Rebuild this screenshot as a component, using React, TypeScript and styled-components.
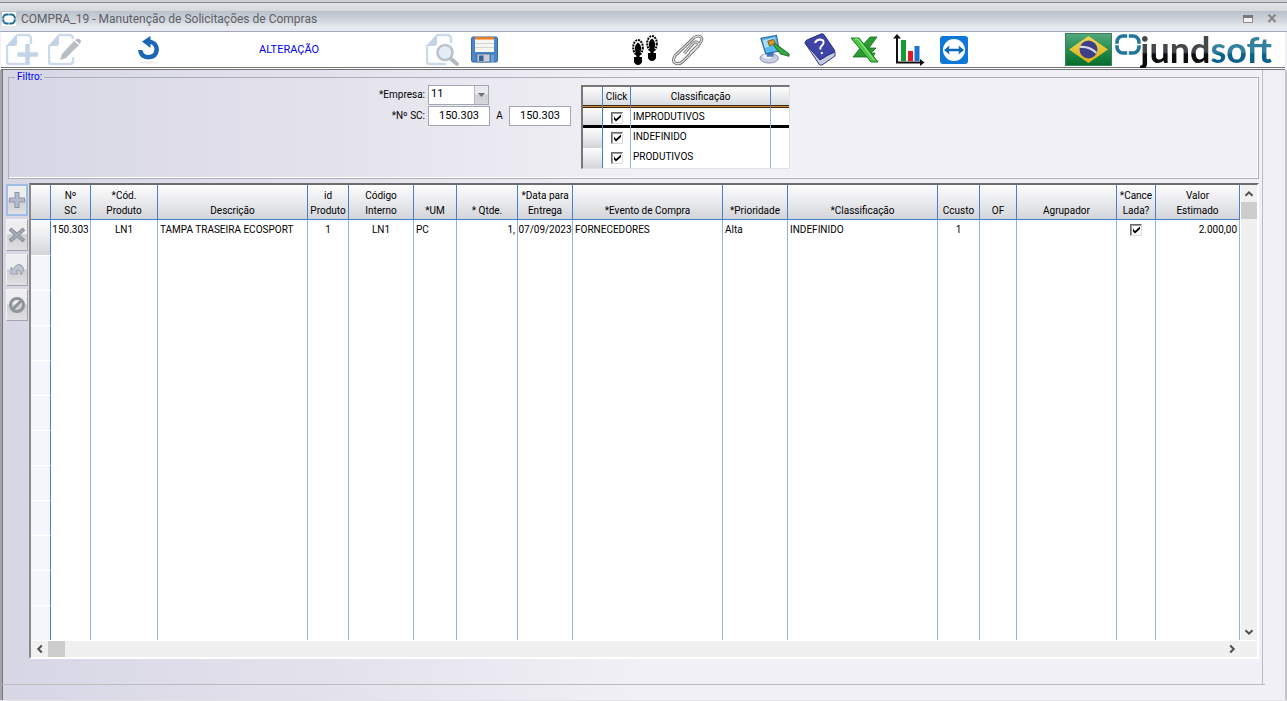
import React from "react";
import styled, { createGlobalStyle, css } from "styled-components";

const sans = `Roboto, "Liberation Sans", sans-serif`;

const GlobalStyle = createGlobalStyle`
  *, *::before, *::after { box-sizing: border-box; }
  body { margin: 0; background: #f1f0f6; font: 10px/14px ${sans}; color: #000; }
  button, input, select { font: inherit; color: inherit; margin: 0; }
`;

const Window = styled.div`
  display: flex;
  flex-direction: column;
  min-height: 100vh;
  border-bottom: 1px solid #e2e2e4;
`;

const TitleBar = styled.header`
  display: flex;
  align-items: center;
  height: 32px;
  padding: 6px 9px 0 2px;
  border-bottom: 1px solid #a3a9bb;
  background: linear-gradient(
    #cfd1d6 0 2px,
    #85878b 2px 3px,
    #e4e5e8 3px,
    #d5d7db 11px,
    #b9c1cb 11px,
    #d0d4da 20px,
    #e6e8ef 27px,
    #e6e8f3 31px
  );
`;

const Title = styled.h1`
  flex: 1;
  margin: 0 0 0 5px;
  font: 400 12px/16px ${sans};
  color: #5c5f66;
`;

const PlainButton = styled.button`
  display: flex;
  align-items: center;
  justify-content: center;
  padding: 0;
  border: 0;
  background: none;
`;

const CaptionButton = styled(PlainButton)`
  width: 12px;
  height: 12px;
  margin-left: 12px;
`;

const Toolbar = styled.div`
  display: flex;
  align-items: center;
  height: 38px;
  margin: 0 2px 0 1px;
  padding: 0 13px 0 5px;
  border-bottom: 3px double #747474;
  background: #fff;
`;

const ToolGroup = styled.div<{ $gap: number; $before?: number }>`
  display: flex;
  align-items: center;
  gap: ${(p) => p.$gap}px;
  margin-left: ${(p) => p.$before ?? 0}px;
`;

const Mode = styled.span`
  width: 64px;
  font-size: 11px;
  line-height: 16px;
  color: #0000f0;
  white-space: nowrap;
`;

const Brand = styled.div`
  display: flex;
  align-items: center;
  margin-left: auto;
`;

const Wordmark = styled.span`
  display: flex;
  margin: -2px 0 0 -2px;
  font: 700 36px/38px Lato, sans-serif;
`;

const WordPart = styled.span<{ $from: string; $to: string }>`
  background: linear-gradient(${(p) => p.$from} 58%, ${(p) => p.$to} 64%);
  background-clip: text;
  color: transparent;
`;

const Body = styled.main`
  flex: 1;
  display: flex;
  flex-direction: column;
  border-left: 2px solid #a5a5a9;
  border-right: 2px solid #c6c6ca;
  background: linear-gradient(90deg, #d7d6e5, #e3e2ec 25%, #f1f0f6 50%);
  box-shadow: inset 1px 0 #76767a;
`;

const Work = styled.div`
  flex: 1;
  margin-right: 22px;
  padding: 0 3px 25px 4px;
  border-right: 1px solid #bcbcc0;
`;

const StatusStrip = styled.footer`
  height: 16px;
  margin-right: 20px;
  border-top: 1px solid #bcbcbc;
`;

const Filter = styled.fieldset`
  display: flex;
  align-items: flex-start;
  margin: 0 0 4px 2px;
  padding: 1px 0 9px 366px;
  border: 1px solid #a9b0b8;
  box-shadow: inset -1px -1px #fff;
`;

const Legend = styled.legend`
  margin-left: -360px;
  padding: 0 2px;
  height: 14px;
  color: #0000f0;
`;

const Fields = styled.div`
  display: grid;
  grid-template-columns: 50px auto;
  gap: 1px 3px;
`;

const FieldLabel = styled.label`
  line-height: 20px;
  text-align: right;
  white-space: nowrap;
`;

const RangeRow = styled.div`
  display: flex;
  align-items: center;
`;

const RangeTo = styled.label`
  width: 19px;
  text-align: center;
`;

const boxed = css`
  height: 20px;
  border: 1px solid #a2a9b3;
  border-radius: 0;
  background: #fff;
  font-size: 11px;
  line-height: 16px;
`;

const NumberBox = styled.input`
  ${boxed}
  width: 62px;
  padding: 0 0 2px;
  text-align: center;
`;

const SelectWrap = styled.div`
  position: relative;
  width: 61px;
  height: 20px;
`;

const Select = styled.select`
  ${boxed}
  width: 100%;
  padding: 0 16px 2px 2px;
  appearance: none;
`;

const SelectArrow = styled.span`
  position: absolute;
  top: 1px;
  right: 1px;
  display: flex;
  align-items: center;
  justify-content: center;
  width: 14px;
  height: 18px;
  border-left: 1px solid #b6bac2;
  background: linear-gradient(#e9eaed 45%, #cdd0d6 50%, #d5d7dc);
  pointer-events: none;
`;

const sunken = css`
  border: 2px solid;
  border-color: #6d6d6d #fff #fff #8a8a8a;
`;

const ClassFrame = styled.div`
  width: 209px;
  margin-left: 10px;
  border: solid;
  border-width: 2px 1px 1px 2px;
  border-color: #777 #e2e2e6 #e2e2e6 #777;
  background: #fff;
`;

const TableBase = styled.table`
  width: 100%;
  table-layout: fixed;
  border-collapse: separate;
  border-spacing: 0;
  th, td { padding: 0; font-weight: 400; overflow: hidden; white-space: nowrap; }
`;

const raised = "linear-gradient(#fdfdfd, #e9eaed 50%, #d3d5da)";

const ClassHead = styled.th`
  height: 21px;
  border-right: 1px solid #4a7fc8;
  background: ${raised};
  box-shadow: inset 0 -1px #3a2a18, inset 0 -2px #d08a3c, inset 0 -3px #3a2a18;
  line-height: 20px;
  vertical-align: top;
  &:last-child { border-right: 0; }
`;

const ClassRow = styled.tr<{ $current?: boolean }>`
  td {
    height: 20px;
    border-right: 1px solid #94b2da;
    line-height: 18px;
    vertical-align: top;
    box-shadow: ${(p) => (p.$current ? "inset 0 -3px #000" : "none")};
  }
  td:first-child {
    background: ${raised};
    border-right-color: #4a7fc8;
  }
  td:nth-child(3) { padding-left: 2px; }
  td:last-child { border-right: 0; }
`;

const CheckWrap = styled.span`
  display: inline-grid;
  width: 12px;
  height: 12px;
  margin: 4px 0 0;
  vertical-align: top;
  > * { grid-area: 1 / 1; }
  svg { display: block; pointer-events: none; }
`;

const CheckInput = styled.input`
  appearance: none;
  width: 12px;
  height: 12px;
  border: 1px solid;
  border-color: #6a6a6a #dcdcdc #dcdcdc #6a6a6a;
  background: #fff;
  box-shadow: inset 1px 1px #9a9a9a;
`;

const Centered = styled.td`
  text-align: center;
`;

const GridArea = styled.section`
  display: flex;
  align-items: flex-start;
`;

const SideButtons = styled.div`
  display: flex;
  flex-direction: column;
  gap: 3px;
  width: 23px;
  padding: 1px 1px 0 0;
`;

const SideButton = styled(PlainButton)<{ $focus?: boolean }>`
  width: 22px;
  height: 32px;
  border: ${(p) => (p.$focus ? "2px solid #9dbce6" : "1px solid #a4a4a8")};
  border-top-color: ${(p) => (p.$focus ? "#9dbce6" : "#f4f4f6")};
  border-left-color: ${(p) => (p.$focus ? "#9dbce6" : "#f4f4f6")};
  background: linear-gradient(#eeeef0 45%, #cfcfd1 50%, #e0e0e2);
`;

const Frame = styled.div`
  ${sunken}
  flex: 1;
  display: grid;
  grid-template-columns: 1fr 16px;
  grid-template-rows: auto 16px;
  gap: 1px;
  min-width: 0;
  background: #fff;
`;

const HeadCell = styled.th`
  height: 35px;
  border-right: 1px solid #4a7fc8;
  border-bottom: 1px solid #4a7fc8;
  background: ${raised};
  line-height: 15px;
  vertical-align: bottom;
  && { padding-bottom: 1px; }
`;

const DataCell = styled.td<{ $align?: string }>`
  height: 35px;
  border-right: 1px solid #94b2da;
  text-align: ${(p) => p.$align ?? "left"};
  line-height: 20px;
  vertical-align: top;
  && { padding: 0 ${(p) => (p.$align === "center" ? 0 : 2)}px; }
`;

const Selector = styled.td<{ $active?: boolean }>`
  height: 35px;
  border-right: 1px solid #4a7fc8;
  border-top: 1px solid #fff;
  background: ${(p) => (p.$active ? raised : "#f3f7fc")};
`;

const ScrollBar = styled.div<{ $vertical?: boolean }>`
  display: flex;
  flex-direction: ${(p) => (p.$vertical ? "column" : "row")};
  grid-column: ${(p) => (p.$vertical ? "auto" : "1 / 3")};
  padding-right: ${(p) => (p.$vertical ? 0 : 17)}px;
  background: #f0f0f0;
`;

const ScrollButton = styled(PlainButton)`
  flex: none;
  width: 17px;
  height: 16px;
`;

const VScrollButton = styled(ScrollButton)`
  width: 16px;
  height: 17px;
`;

const Thumb = styled.div`
  flex: none;
  width: 17px;
  height: 17px;
  max-width: 100%;
  max-height: 100%;
  background: #cdcdcd;
`;

const Spacer = styled.div`
  flex: 1;
`;

function Check({ label }: { label: string }) {
  return (
    <CheckWrap>
      <CheckInput type="checkbox" defaultChecked aria-label={label} />
      <svg width="12" height="12" viewBox="0 0 12 12" aria-hidden="true">
        <path d="M3 4.500v3L5 9.500 10 5V2.500L5 7z" fill="#000" />
      </svg>
    </CheckWrap>
  );
}

function Chevron({ turn }: { turn: number }) {
  return (
    <svg width="10" height="10" viewBox="0 0 10 10" aria-hidden="true">
      <path d="M1.500 6.800 5 3.300 8.500 6.800" fill="none" stroke="#505050" strokeWidth="2" transform={`rotate(${turn} 5 5)`} />
    </svg>
  );
}

function NewIcon() {
  return (
    <svg width="34" height="34" viewBox="0 0 34 34">
      <path d="M11 2H21q4 0 4 4v5M19 31H4q-3 0-3-3V12" fill="none" stroke="#cddaea" strokeWidth="2.400" />
      <path d="M0 13 11 1v9q0 3-3 3z" fill="#c3d2e6" />
      <path d="M21.500 11v21M11.500 21.500H32" stroke="#c3d3e8" strokeWidth="4.500" />
    </svg>
  );
}

function EditIcon() {
  return (
    <svg width="34" height="34" viewBox="0 0 34 34">
      <path d="M10.500 2H21q4 0 4 4M25 24v4q0 3-3 3H4q-3 0-3-3V12" fill="none" stroke="#cddaea" strokeWidth="2.400" />
      <path d="M0 13 11 1v9q0 3-3 3z" fill="#c3d2e6" />
      <path d="M12 27l2-6L26 8l5 4-13 13z" fill="#b9bdc4" />
      <path d="M27 7q3-2 5-.5t-.3 4.500z" fill="#b3b8c0" />
    </svg>
  );
}

function UndoIcon() {
  return (
    <svg width="22" height="28" viewBox="0 0 22 28">
      <ellipse cx="11" cy="26.500" rx="9" ry="1.200" fill="#ececec" />
      <path d="M0 14h4.500q.8 5 6 5 5.500-.3 6-5.500-.3-4.500-4-5.500V12L4 5.500 12.500 0v3.500q8 2 8.500 10-.8 9.800-10.500 10Q.8 23.200 0 14z" fill="#1c66b8" />
    </svg>
  );
}

function PreviewIcon() {
  return (
    <svg width="34" height="34" viewBox="0 0 34 34">
      <path d="M11 2H21q4 0 4 4v4M20 31H4q-3 0-3-3V12" fill="none" stroke="#cddaea" strokeWidth="2.400" />
      <path d="M0 13 11 1v9q0 3-3 3z" fill="#c3d2e6" />
      <path d="M24 25l7 6" stroke="#b6bac0" strokeWidth="4" strokeLinecap="round" />
      <circle cx="19" cy="19.500" r="7.500" fill="#e7edf7" stroke="#bcc2ca" strokeWidth="2.600" />
    </svg>
  );
}

function SaveIcon() {
  return (
    <svg width="28" height="28" viewBox="0 0 28 28">
      <rect x=".5" y="1" width="26" height="25" rx="1.500" fill="#4b86cb" stroke="#3566a4" />
      <path d="M4 1h19v15H4z" fill="#f5f5f2" />
      <path d="M4 1h19v2.500H4z" fill="#f07d1c" />
      <path d="M4 7.500h19M4 11.500h19" stroke="#d4d4d0" />
      <path d="M6 18h13v8H6z" fill="#c9ccd0" stroke="#345f94" strokeWidth=".7" />
      <path d="M8 19.500h4.500V25H8z" fill="#345f94" />
      <path d="M20 19h3v7h-3z" fill="#6fa1da" />
    </svg>
  );
}

function StepsIcon() {
  const foot = (
    <>
      <ellipse cx="6" cy="8.500" rx="4.800" ry="7.500" fill="none" stroke="#000" strokeWidth="2" strokeDasharray="2 .9" />
      <path d="M6 3.500q3.200 2 3.200 6.500L7.500 18h-3L2.800 10q0-4.500 3.200-6.500z" fill="#000" />
      <path d="M2 18h8v5q-1.200 3-4 3t-4-3z" fill="#000" />
    </>
  );
  return (
    <svg width="28" height="32" viewBox="0 0 28 32">
      <g transform="translate(1 5)">{foot}</g>
      <g transform="translate(15 1)">{foot}</g>
    </svg>
  );
}

function ClipIcon() {
  const d = "M13 20 22 10q3-3 5-1t-1 5L12 28q-4 4-8 2t0-8L23 4q4-3 7-1t-1 7L19 20";
  return (
    <svg width="34" height="32" viewBox="0 0 34 33">
      <path d={d} fill="none" stroke="#6b6b6b" strokeWidth="3" strokeLinejoin="round" />
      <path d={d} fill="none" stroke="#e2e2e2" strokeWidth="1.300" />
    </svg>
  );
}

function MonitorIcon() {
  return (
    <svg width="31" height="31" viewBox="0 0 32 31">
      <ellipse cx="10.500" cy="24.500" rx="9.500" ry="5" fill="#c9cbe2" stroke="#8e90b0" />
      <ellipse cx="9" cy="22.500" rx="5" ry="2.500" fill="#f2f2fa" />
      <path d="M8 17h7v6H8z" fill="#4a78b8" />
      <path d="M2 4 18 1l3 16-14 3z" fill="#58b8f0" stroke="#2a67a8" strokeWidth="1.200" />
      <path d="M4 6l12-3 2 7L6 14z" fill="#a5dcfa" />
      <path d="M9 7l6-2 2 4-6 3z" fill="#d69b2d" stroke="#7c5510" />
      <path d="M15 11l2-1.500 14 10.500v2.500L22 20z" fill="#37a840" stroke="#176a22" />
    </svg>
  );
}

function HelpIcon() {
  return (
    <svg width="32" height="33" viewBox="0 0 32 33">
      <path d="M1 10 15 31q1 1.500 3 1l13-9v-4L16 25z" fill="#c9cbe0" stroke="#33357a" />
      <path d="M1 10q0-2 2-3L17 1q2-.7 3 .7L31 18 16 27z" fill="#3f45a6" stroke="#262b7c" />
      <path d="M11 10q1-3 4.500-3.500Q20 6.500 19.500 10q-.5 2-2.500 3.500-1 1-.5 3M17.500 19l.7 2" fill="none" stroke="#fff" strokeWidth="2" />
    </svg>
  );
}

function ExcelIcon() {
  return (
    <svg width="29" height="28" viewBox="0 0 29 28">
      <path d="M20 1h7l-8 11h7l-5 5h4l-2 4H3l8-10z" fill="#2d9b33" stroke="#166d1e" strokeWidth=".8" />
      <path d="M1 2h8l19 24h-7z" fill="#4fc545" stroke="#187421" />
      <path d="M5 3h3l16 21" fill="none" stroke="#a5eb96" strokeWidth="1" />
    </svg>
  );
}

function ChartIcon() {
  return (
    <svg width="33" height="32" viewBox="0 0 33 32">
      <path d="M8 6h5v21H8z" fill="#149c32" />
      <path d="M15 17h5v10h-5z" fill="#e31a24" />
      <path d="M21.500 12h5v15h-5z" fill="#1a73cf" />
      <path d="M4 3v25.500h24" fill="none" stroke="#111" strokeWidth="2" />
      <path d="M0 4.500 4 0l4 4.500zM27 25l4.500 3.500L27 32z" fill="#111" />
    </svg>
  );
}

function RemoteIcon() {
  return (
    <svg width="28" height="28" viewBox="0 0 28 28">
      <rect width="28" height="28" rx="3" fill="#0d78d8" />
      <circle cx="14" cy="14" r="11" fill="#fff" />
      <path d="M4 14l5.500-4.500-.5 3.200h10L18.500 9.500 24 14l-5.500 4.500.5-3.200H9l.5 3.200z" fill="#0d68b8" />
    </svg>
  );
}

function Flag() {
  return (
    <svg width="47" height="33" viewBox="0 0 47 33" role="img" aria-label="Brasil">
      <defs>
        <linearGradient id="leaf" x2="0" y2="1">
          <stop offset="0" stopColor="#53a87c" />
          <stop offset=".55" stopColor="#228a4c" />
          <stop offset="1" stopColor="#046c2c" />
        </linearGradient>
        <linearGradient id="gold" x2="0" y2="1">
          <stop offset="0" stopColor="#ecd95c" />
          <stop offset="1" stopColor="#dcae10" />
        </linearGradient>
      </defs>
      <rect x=".5" y=".5" width="46" height="32" fill="url(#leaf)" stroke="#3e7e5a" />
      <path d="M23.500 3 43 16.500 23.500 30 4 16.500z" fill="url(#gold)" />
      <circle cx="23.500" cy="16.500" r="9" fill="#3f3f86" />
      <path d="M15 14q9-1 16.500 6" fill="none" stroke="#cfd8ea" strokeWidth="2" />
    </svg>
  );
}

function RingLogo() {
  return (
    <svg width="28" height="24" viewBox="0 0 28 24" aria-hidden="true">
      <rect x="3" y="3" width="22" height="17" rx="6" fill="none" stroke="#23759a" strokeWidth="3.600" />
      <path d="M14 0v6M14 17v6M0 11.500h6M22 11.500h6" stroke="#fff" strokeWidth="1.600" />
    </svg>
  );
}

const LogoSlot = styled.span`
  display: flex;
  align-self: flex-start;
  margin: 1px 0 0 2px;
`;

const side = { fill: "none", stroke: "#8d929b", strokeWidth: 3 } as const;

const sideActions = [
  { name: "Incluir linha", art: <path d="M9 1v16M1 9h16" stroke="#8d97a6" strokeWidth="5" />, inner: <path d="M9 2v14M2 9h14" stroke="#b2bccb" strokeWidth="3" /> },
  { name: "Excluir linha", art: <path d="M2 3l14 12M16 3 2 15" {...side} strokeWidth={4} />, inner: <path d="M3 4l12 10M15 4 3 14" stroke="#a3acbb" strokeWidth="2" /> },
  { name: "Desfazer", art: <path d="M3 6v7h7l-2-3q4-3 5 4 5-7 0-10-4-2-8 4z" fill="#bdc5d2" stroke="#989fab" />, inner: null },
  { name: "Cancelar", art: <circle cx="9" cy="9" r="6.500" {...side} />, inner: <path d="M5 13 13 5" {...side} /> },
];

type Column = { head: string[]; value: React.ReactNode; width?: number; align?: string };

const columns: Column[] = [
  { head: ["Nº", "SC"], value: "150.303", width: 40, align: "center" },
  { head: ["*Cód.", "Produto"], value: "LN1", width: 67, align: "center" },
  { head: ["Descrição"], value: "TAMPA TRASEIRA ECOSPORT", width: 150 },
  { head: ["id", "Produto"], value: "1", width: 41, align: "center" },
  { head: ["Código", "Interno"], value: "LN1", width: 65, align: "center" },
  { head: ["*UM"], value: "PC", width: 43 },
  { head: ["* Qtde."], value: "1,", width: 61, align: "right" },
  { head: ["*Data para", "Entrega"], value: "07/09/2023", width: 55, align: "center" },
  { head: ["*Evento de Compra"], value: "FORNECEDORES", width: 150 },
  { head: ["*Prioridade"], value: "Alta", width: 65 },
  { head: ["*Classificação"], value: "INDEFINIDO", width: 150 },
  { head: ["Ccusto"], value: "1", width: 42, align: "center" },
  { head: ["OF"], value: "", width: 37 },
  { head: ["Agrupador"], value: "" },
  { head: ["*Cance", "Lada?"], value: <Check label="Cancelada" />, width: 39, align: "center" },
  { head: ["Valor", "Estimado"], value: "2.000,00", width: 84, align: "right" },
];

const emptyRows = Array.from({ length: 11 }, (_, i) => i);

export default function App() {
  return (
    <Window>
      <GlobalStyle />
      <TitleBar>
        <svg width="14" height="14" viewBox="0 0 14 14" aria-hidden="true">
          <path d="M0 0h14v14H0z" fill="#fff" />
          <rect x="1.200" y="2.500" width="11.600" height="9" rx="3.500" fill="none" stroke="#1f7090" strokeWidth="2" />
          <path d="M7 1v3M7 10v3M0 7h3M11 7h3" stroke="#fff" strokeWidth=".6" />
        </svg>
        <Title>COMPRA_19 - Manutenção de Solicitações de Compras</Title>
        <CaptionButton aria-label="Restaurar">
          <svg width="10" height="8" viewBox="0 0 10 8">
            <path d="M.5 1.500h9v6h-9z" fill="#f2f2f4" stroke="#8c8c90" />
            <path d="M0 0h10v3H0z" fill="#77777b" />
          </svg>
        </CaptionButton>
        <CaptionButton aria-label="Fechar">
          <svg width="10" height="9" viewBox="0 0 10 9">
            <path d="M1.500.500 8.500 8M8.500.500 1.500 8" stroke="#88888c" strokeWidth="2.200" />
          </svg>
        </CaptionButton>
      </TitleBar>

      <Toolbar>
        <ToolGroup $gap={8}>
          <PlainButton aria-label="Novo"><NewIcon /></PlainButton>
          <PlainButton aria-label="Editar"><EditIcon /></PlainButton>
        </ToolGroup>
        <ToolGroup $gap={99} $before={56}>
          <PlainButton aria-label="Voltar"><UndoIcon /></PlainButton>
          <Mode>ALTERAÇÃO</Mode>
        </ToolGroup>
        <ToolGroup $gap={11} $before={103}>
          <PlainButton aria-label="Visualizar"><PreviewIcon /></PlainButton>
          <PlainButton aria-label="Salvar"><SaveIcon /></PlainButton>
        </ToolGroup>
        <ToolGroup $gap={12} $before={132}>
          <PlainButton aria-label="Passos"><StepsIcon /></PlainButton>
          <PlainButton aria-label="Anexos"><ClipIcon /></PlainButton>
        </ToolGroup>
        <ToolGroup $gap={14} $before={54}>
          <PlainButton aria-label="Aparência"><MonitorIcon /></PlainButton>
          <PlainButton aria-label="Ajuda"><HelpIcon /></PlainButton>
          <PlainButton aria-label="Exportar para Excel"><ExcelIcon /></PlainButton>
          <PlainButton aria-label="Gráfico"><ChartIcon /></PlainButton>
          <PlainButton aria-label="Suporte remoto"><RemoteIcon /></PlainButton>
        </ToolGroup>
        <Brand>
          <Flag />
          <LogoSlot><RingLogo /></LogoSlot>
          <Wordmark>
            <WordPart $from="#45484b" $to="#0c0c0c">jund</WordPart>
            <WordPart $from="#33809f" $to="#0b6288">soft</WordPart>
          </Wordmark>
        </Brand>
      </Toolbar>

      <Body>
        <Work>
          <Filter>
            <Legend>Filtro:</Legend>
            <Fields>
              <FieldLabel htmlFor="empresa">*Empresa:</FieldLabel>
              <SelectWrap>
                <Select id="empresa" defaultValue="11">
                  <option value="11">11</option>
                </Select>
                <SelectArrow>
                  <svg width="7" height="4" viewBox="0 0 7 4" aria-hidden="true">
                    <path d="M0 0h7L3.500 4z" fill="#6e7178" />
                  </svg>
                </SelectArrow>
              </SelectWrap>
              <FieldLabel htmlFor="sc-from">*Nº SC:</FieldLabel>
              <RangeRow>
                <NumberBox id="sc-from" defaultValue="150.303" />
                <RangeTo htmlFor="sc-to">A</RangeTo>
                <NumberBox id="sc-to" defaultValue="150.303" />
              </RangeRow>
            </Fields>
            <ClassFrame>
              <TableBase>
                <colgroup>
                  <col style={{ width: 20 }} />
                  <col style={{ width: 28 }} />
                  <col style={{ width: 140 }} />
                  <col />
                </colgroup>
                <thead>
                  <tr>
                    <ClassHead />
                    <ClassHead>Click</ClassHead>
                    <ClassHead>Classificação</ClassHead>
                    <ClassHead />
                  </tr>
                </thead>
                <tbody>
                  {["IMPRODUTIVOS", "INDEFINIDO", "PRODUTIVOS"].map((name, i) => (
                    <ClassRow key={name} $current={i === 0}>
                      <td />
                      <Centered><Check label={name} /></Centered>
                      <td>{name}</td>
                      <td />
                    </ClassRow>
                  ))}
                </tbody>
              </TableBase>
            </ClassFrame>
          </Filter>

          <GridArea>
            <SideButtons>
              {sideActions.map((a, i) => (
                <SideButton key={a.name} $focus={i === 0} aria-label={a.name}>
                  <svg width="18" height="18" viewBox="0 0 18 18">{a.art}{a.inner}</svg>
                </SideButton>
              ))}
            </SideButtons>
            <Frame>
              <TableBase>
                <colgroup>
                  <col style={{ width: 20 }} />
                  {columns.map((c, i) => <col key={i} style={{ width: c.width }} />)}
                </colgroup>
                <thead>
                  <tr>
                    <HeadCell />
                    {columns.map((c) => (
                      <HeadCell key={c.head.join(" ")}>
                        {c.head.map((line, i) => (
                          <React.Fragment key={line}>{i > 0 && <br />}{line}</React.Fragment>
                        ))}
                      </HeadCell>
                    ))}
                  </tr>
                </thead>
                <tbody>
                  <tr>
                    <Selector $active />
                    {columns.map((c, i) => <DataCell key={i} $align={c.align}>{c.value}</DataCell>)}
                  </tr>
                  {emptyRows.map((r) => (
                    <tr key={r}>
                      <Selector />
                      {columns.map((_, i) => <DataCell key={i} />)}
                    </tr>
                  ))}
                </tbody>
              </TableBase>
              <ScrollBar $vertical>
                <VScrollButton aria-label="Rolar para cima"><Chevron turn={0} /></VScrollButton>
                <Thumb />
                <Spacer />
                <VScrollButton aria-label="Rolar para baixo"><Chevron turn={180} /></VScrollButton>
              </ScrollBar>
              <ScrollBar>
                <ScrollButton aria-label="Rolar para a esquerda"><Chevron turn={270} /></ScrollButton>
                <Thumb />
                <Spacer />
                <ScrollButton aria-label="Rolar para a direita"><Chevron turn={90} /></ScrollButton>
              </ScrollBar>
            </Frame>
          </GridArea>
        </Work>
        <StatusStrip />
      </Body>
    </Window>
  );
}
